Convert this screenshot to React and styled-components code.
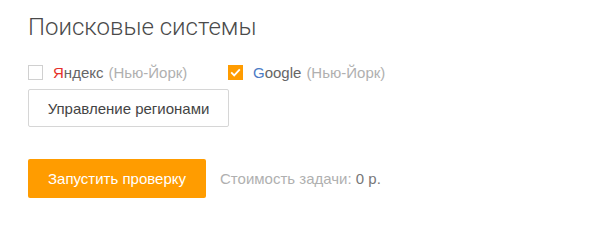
import React, { useState } from 'react'
import styled, { createGlobalStyle } from 'styled-components'

const Global = createGlobalStyle`
  body {
    margin: 0;
    background: #fff;
    font-family: 'Liberation Sans', Arial, sans-serif;
  }
`

const Panel = styled.div`
  padding: 12px 28px 0 28px;
`

const Title = styled.h2`
  margin: 0;
  font-family: Roboto, 'Liberation Sans', sans-serif;
  font-weight: 300;
  font-size: 24px;
  line-height: 30px;
  color: #4a4a4a;
`

const Engines = styled.div`
  display: flex;
  gap: 12px;
  margin-top: 21px;
`

const Engine = styled.label`
  display: flex;
  align-items: center;
  gap: 10px;
  width: 188px;
  height: 18px;
  font-size: 15px;
  color: #666;
  cursor: pointer;
`

const Box = styled.span`
  flex: none;
  width: 15px;
  height: 15px;
  box-sizing: border-box;
  border: 1px solid ${p => (p.checked ? '#ff9c00' : '#d0d0d0')};
  background: ${p => (p.checked ? '#ff9c00' : '#fff')};
  display: flex;
  align-items: center;
  justify-content: center;
`

const Region = styled.span`
  color: #b0b0b0;
  margin-left: 5px;
`

const Accent = styled.span`
  color: ${p => p.color};
`

const Button = styled.button`
  display: block;
  font-family: 'Liberation Sans', Arial, sans-serif;
  font-size: 15px;
  border-radius: 2px;
  cursor: pointer;
  padding: 0;
`

const RegionsButton = styled(Button)`
  margin-top: 8px;
  width: 201px;
  height: 38px;
  background: #fff;
  border: 1px solid #d6d6d6;
  color: #444;
`

const Footer = styled.div`
  display: flex;
  align-items: center;
  gap: 14px;
  margin-top: 32px;
`

const RunButton = styled(Button)`
  width: 178px;
  height: 39px;
  background: #ff9c00;
  border: none;
  color: #fff;
`

const Cost = styled.span`
  font-size: 15px;
  color: #b0b0b0;
  & b {
    font-weight: normal;
    color: #777;
  }
`

const Check = () => (
  <svg width="11" height="9" viewBox="0 0 11 9">
    <path d="M1.2 4.4l3 3 5.6-6" fill="none" stroke="#fff" strokeWidth="1.8" />
  </svg>
)

export default function App() {
  const [engines, setEngines] = useState({ yandex: false, google: true })
  const toggle = k => setEngines(s => ({ ...s, [k]: !s[k] }))

  return (
    <Panel>
      <Global />
      <Title>Поисковые системы</Title>
      <Engines>
        <Engine onClick={() => toggle('yandex')}>
          <Box checked={engines.yandex}>{engines.yandex && <Check />}</Box>
          <span>
            <Accent color="#e5302a">Я</Accent>ндекс<Region>(Нью-Йорк)</Region>
          </span>
        </Engine>
        <Engine onClick={() => toggle('google')}>
          <Box checked={engines.google}>{engines.google && <Check />}</Box>
          <span>
            <Accent color="#4b7bc5">G</Accent>oogle<Region>(Нью-Йорк)</Region>
          </span>
        </Engine>
      </Engines>
      <RegionsButton>Управление регионами</RegionsButton>
      <Footer>
        <RunButton>Запустить проверку</RunButton>
        <Cost>
          Стоимость задачи: <b>0 р.</b>
        </Cost>
      </Footer>
    </Panel>
  )
}
